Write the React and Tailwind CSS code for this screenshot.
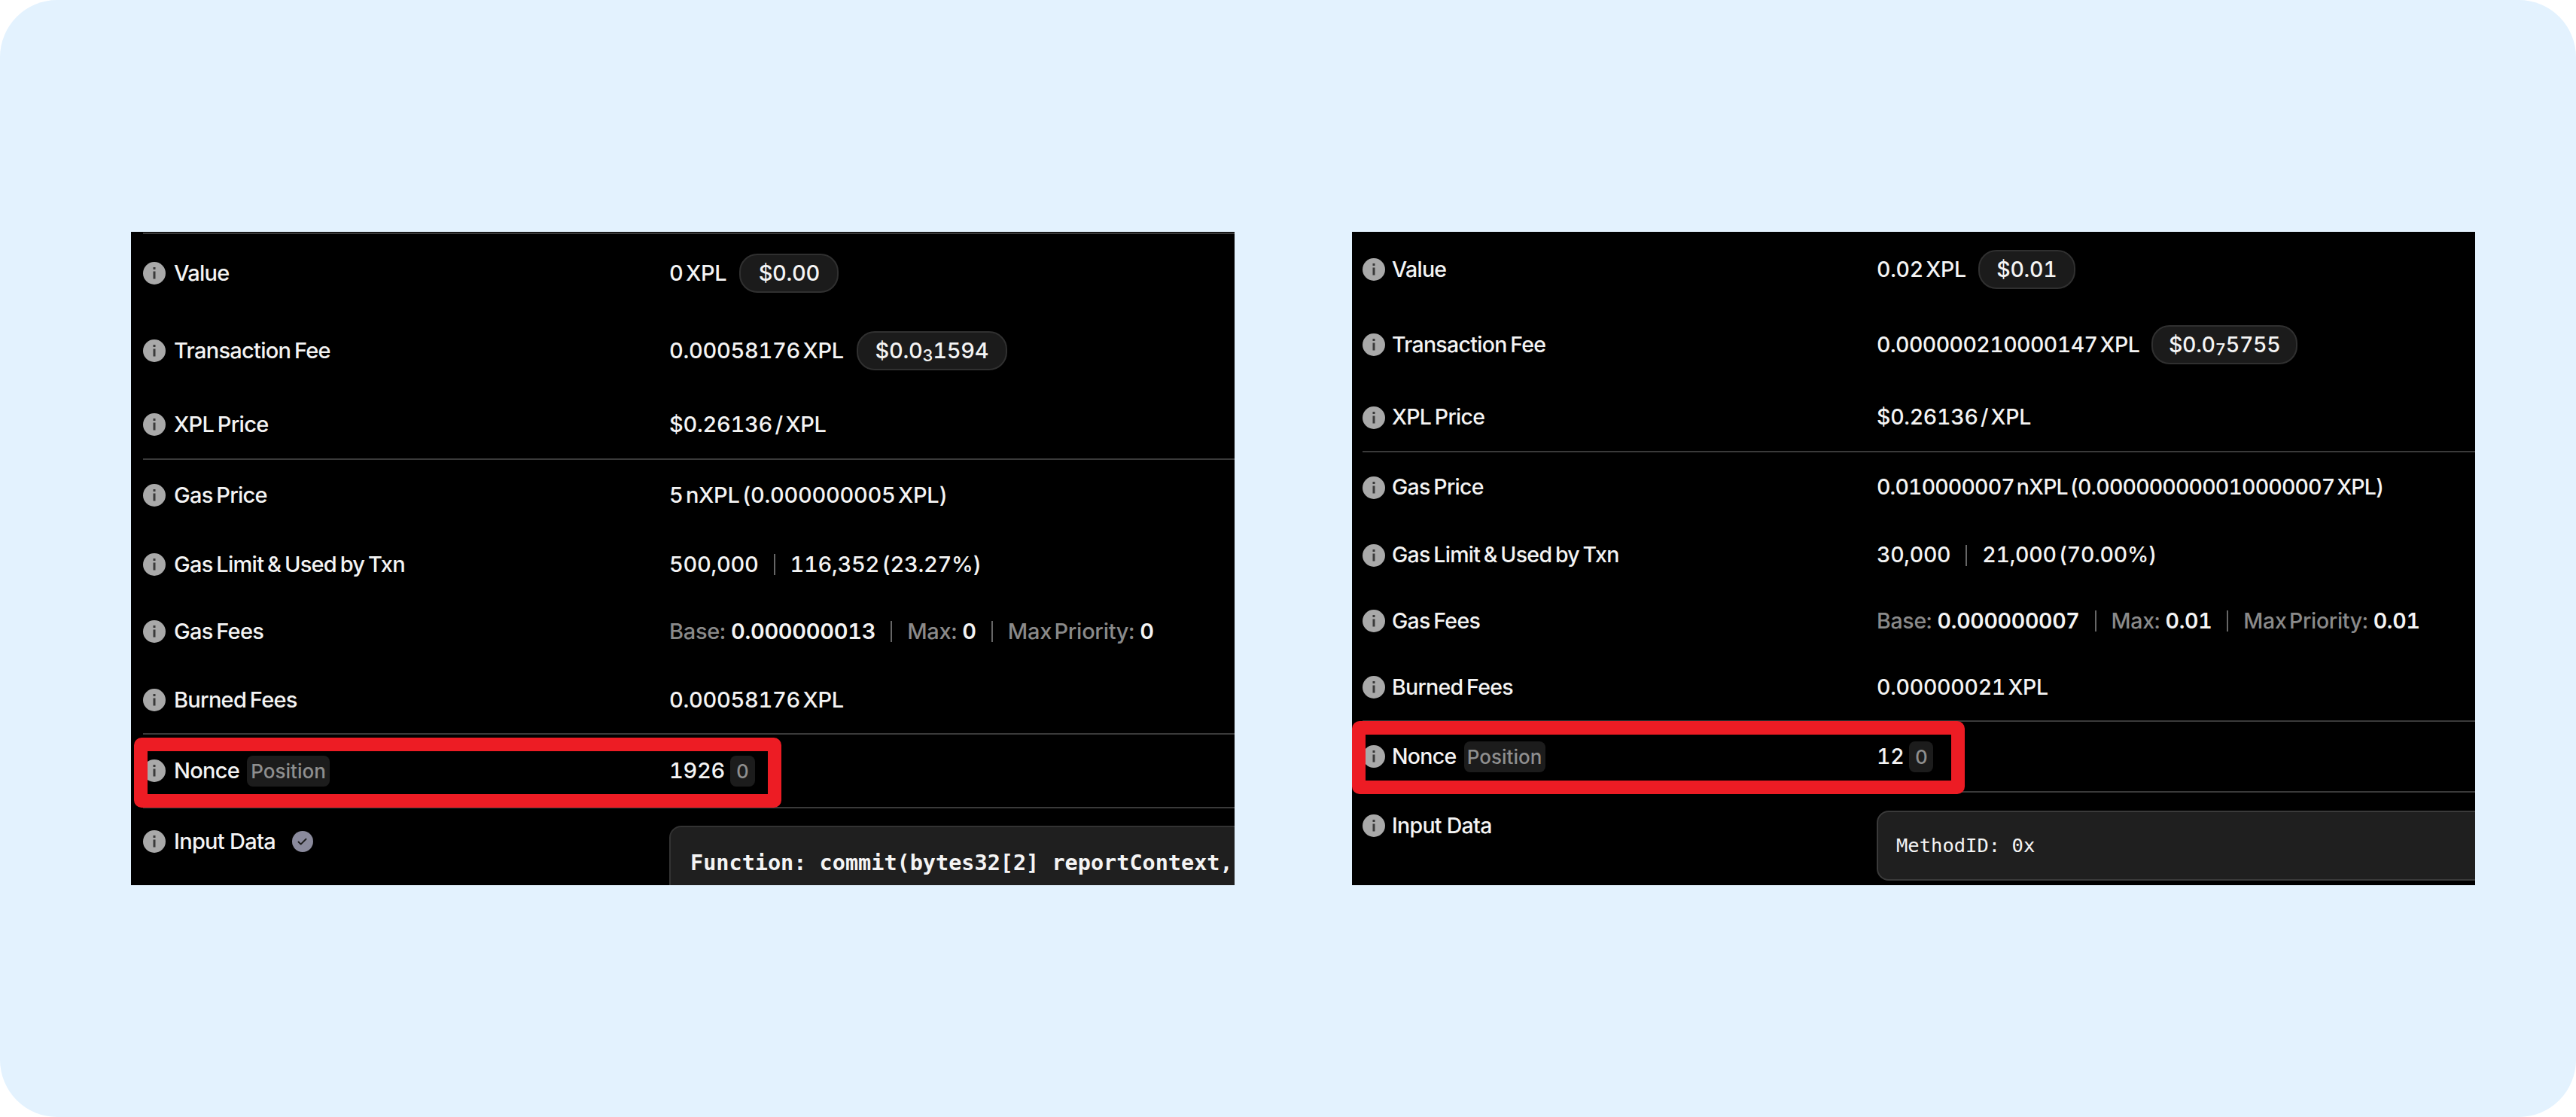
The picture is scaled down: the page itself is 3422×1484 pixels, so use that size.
import { Check } from 'lucide-react';

const sans = 'font-["Inter",sans-serif]';

function InfoDot() {
  return (
    <span className="flex h-[30px] w-[30px] shrink-0 items-center justify-center rounded-full bg-[#a9a9a9]">
      <svg width="8" height="18" viewBox="0 0 8 18" fill="#3a3a3a">
        <rect x="2.5" y="1" width="3" height="3" />
        <rect x="2.5" y="6.5" width="3" height="10" />
      </svg>
    </span>
  );
}

function Usd({ children, className }) {
  return (
    <span className={`flex h-[52px] items-center justify-center rounded-[24px] border-2 border-[#303030] bg-[#1b1b1b] [word-spacing:0] ${className}`}>
      {children}
    </span>
  );
}

function Chip({ children, className }) {
  return (
    <span className={`flex h-[41px] items-center justify-center rounded-[8px] bg-[#1c1c1c] text-[26px] tracking-normal text-[#8f8f8f] ${className}`}>
      {children}
    </span>
  );
}

function Row({ label, extra, h, col, gap, children }) {
  return (
    <div className={`flex items-center ${h}`}>
      <div className={`flex shrink-0 items-center tracking-[-0.025em] [word-spacing:-0.08em] ${col}`}>
        <InfoDot />
        <span className={`whitespace-nowrap ${gap}`}>{label}</span>
        {extra}
      </div>
      <div className="flex items-center whitespace-nowrap tracking-[-0.01em] tabular-nums [word-spacing:-0.14em]">{children}</div>
    </div>
  );
}

const Sep = () => <span className="mx-[20px] h-[28px] w-[2px] bg-[#666666]" />;
const Grey = ({ children }) => <span className="mr-[4px] text-[#8a8a8a]">{children}</span>;
const Bold = ({ children }) => <span className="font-semibold">{children}</span>;
const Divider = () => <div className="h-[2px] w-full bg-[#3a3a3a]" />;

function LeftPanel() {
  const col = 'w-[699px]';
  const gap = 'ml-[11px]';
  return (
    <div className={`h-[868px] w-[1466px] shrink-0 overflow-hidden bg-black pl-[16px] pt-[1px] text-[29px] font-medium text-[#f4f4f4] ${sans}`}>
      <Divider />
      <Row label="Value" h="h-[102px] pt-[2px]" col={col} gap={gap}>
        0 XPL<Usd className="ml-[17px] w-[132px]">$0.00</Usd>
      </Row>
      <Row label="Transaction Fee" h="h-[104px] pt-[2px]" col={col} gap={gap}>
        0.00058176 XPL
        <Usd className="ml-[17px] w-[200px]">$0.0<sub className="text-[22px]">3</sub>1594</Usd>
      </Row>
      <Row label="XPL Price" h="h-[92px] pt-[2px]" col={col} gap={gap}>$0.26136 / XPL</Row>
      <Divider />
      <Row label="Gas Price" h="h-[92px] pt-[2px]" col={col} gap={gap}>5 nXPL (0.000000005 XPL)</Row>
      <Row label="Gas Limit & Used by Txn" h="h-[92px] pt-[2px]" col={col} gap={gap}>
        500,000<Sep />116,352 (23.27%)
      </Row>
      <Row label="Gas Fees" h="h-[88px]" col={col} gap={gap}>
        <Grey>Base:&nbsp;</Grey><Bold>0.000000013</Bold><Sep />
        <Grey>Max:&nbsp;</Grey><Bold>0</Bold><Sep />
        <Grey>Max Priority:&nbsp;</Grey><Bold>0</Bold>
      </Row>
      <Row label="Burned Fees" h="h-[91px] pt-[2px]" col={col} gap={gap}>0.00058176 XPL</Row>
      <Divider />
      <Row
        label="Nonce"
        h="h-[96px]"
        col={col}
        gap={gap}
        extra={<Chip className="ml-[10px] w-[110px]">Position</Chip>}
      >
        1926<Chip className="ml-[7px] w-[33px]">0</Chip>
      </Row>
      <Divider />
      <div className="flex pt-[23px]">
        <div className={`mt-[6px] flex h-[30px] shrink-0 items-center tracking-[-0.025em] ${col}`}>
          <InfoDot />
          <span className={gap}>Input Data</span>
          <span className="ml-[22px] flex h-[28px] w-[28px] items-center justify-center rounded-full bg-[#8a8a9c]">
            <Check size={15} strokeWidth={3} className="text-[#1b1b1b]" />
          </span>
        </div>
        <div className="h-[160px] w-[900px] shrink-0 rounded-[16px] border-2 border-[#333333] bg-[#1f1f1f] pl-[26px] pt-[29px] font-['DejaVu_Sans_Mono',monospace] text-[28.5px] font-bold leading-[38px] whitespace-nowrap">
          Function: commit(bytes32[2] reportContext,
        </div>
      </div>
    </div>
  );
}

function RightPanel() {
  const col = 'w-[683px]';
  const gap = 'ml-[9px]';
  return (
    <div className={`h-[868px] w-[1492px] shrink-0 overflow-hidden bg-black pl-[14px] text-[28.5px] font-medium text-[#f4f4f4] ${sans}`}>
      <Row label="Value" h="h-[100px]" col={col} gap={gap}>
        0.02 XPL<Usd className="ml-[16px] w-[129px]">$0.01</Usd>
      </Row>
      <Row label="Transaction Fee" h="h-[100px]" col={col} gap={gap}>
        <span className="tracking-[-0.02em]">0.000000210000147 XPL</span>
        <Usd className="ml-[16px] w-[194px]">$0.0<sub className="text-[22px]">7</sub>5755</Usd>
      </Row>
      <Row label="XPL Price" h="h-[91px] pt-[2px]" col={col} gap={gap}>$0.26136 / XPL</Row>
      <Divider />
      <Row label="Gas Price" h="h-[93px]" col={col} gap={gap}>
        <span className="tracking-[-0.03em]">0.010000007 nXPL (0.000000000010000007 XPL)</span>
      </Row>
      <Row label="Gas Limit & Used by Txn" h="h-[87px]" col={col} gap={gap}>
        30,000<Sep />21,000 (70.00%)
      </Row>
      <Row label="Gas Fees" h="h-[88px]" col={col} gap={gap}>
        <Grey>Base:&nbsp;</Grey><Bold>0.000000007</Bold><Sep />
        <Grey>Max:&nbsp;</Grey><Bold>0.01</Bold><Sep />
        <Grey>Max Priority:&nbsp;</Grey><Bold>0.01</Bold>
      </Row>
      <Row label="Burned Fees" h="h-[88px]" col={col} gap={gap}>0.00000021 XPL</Row>
      <Divider />
      <Row
        label="Nonce"
        h="h-[92px]"
        col={col}
        gap={gap}
        extra={<Chip className="ml-[10px] w-[108px]">Position</Chip>}
      >
        12<Chip className="ml-[7px] w-[32px]">0</Chip>
      </Row>
      <Divider />
      <div className="flex pt-[24px]">
        <div className={`mt-[5px] flex h-[30px] shrink-0 items-center tracking-[-0.025em] ${col}`}>
          <InfoDot />
          <span className={gap}>Input Data</span>
        </div>
        <div className="flex h-[93px] w-[900px] shrink-0 items-center rounded-[16px] border-2 border-[#3a3a3a] bg-[#1f1f1f] pl-[24px] font-['DejaVu_Sans_Mono',monospace] text-[25.5px] font-normal whitespace-nowrap">
          MethodID: 0x
        </div>
      </div>
    </div>
  );
}

export default function App() {
  return (
    <div className="h-[1484px] w-[3422px] bg-white">
      <div className="relative flex h-full w-full gap-[156px] overflow-hidden rounded-[76px] bg-[#e3f2fe] pl-[174px] pt-[308px]">
        <LeftPanel />
        <RightPanel />
        {/* red highlight boxes drawn over the Nonce rows */}
        <div className="absolute left-[178px] top-[980px] h-[93px] w-[860px] rounded-[10px] border-[18px] border-[#ed1c24]" />
        <div className="absolute left-[1796px] top-[958px] h-[97px] w-[814px] rounded-[10px] border-[18px] border-[#ed1c24]" />
      </div>
    </div>
  );
}
